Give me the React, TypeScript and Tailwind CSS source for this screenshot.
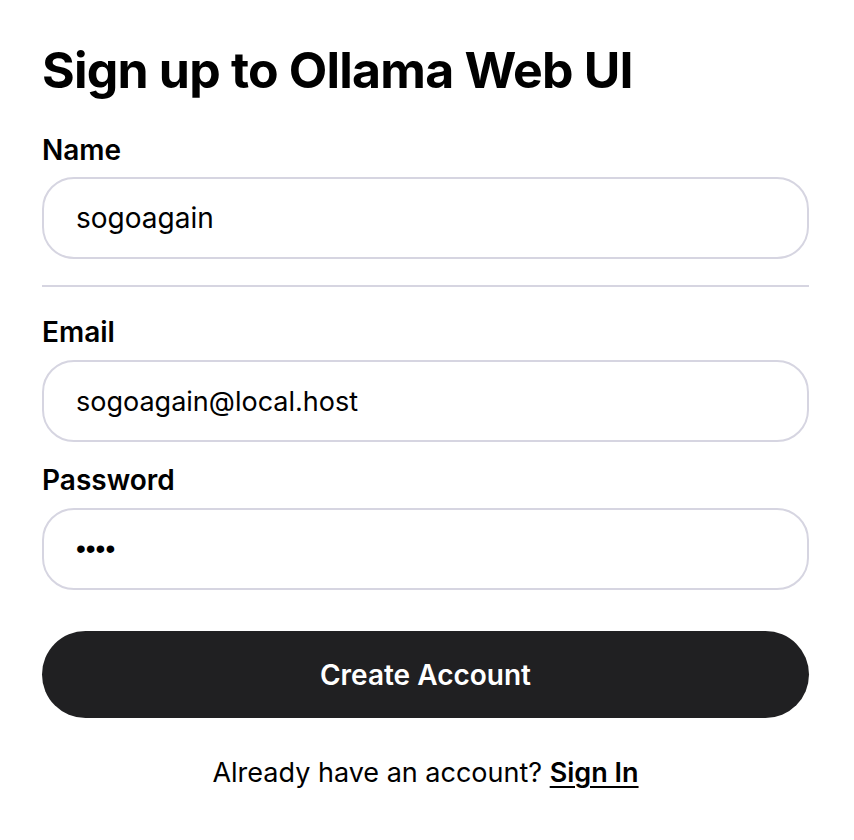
export default function App() {
  return (
    <div
      className="min-h-[840px] bg-white pl-[42px] pr-[45px] pt-[40px] text-black"
      style={{ fontFamily: "Inter, 'Liberation Sans', sans-serif" }}
    >
      <h1 className="text-[50px] font-bold leading-[60px] tracking-[-0.8px]">
        Sign up to Ollama Web UI
      </h1>

      <form className="mt-[34px] flex flex-col" onSubmit={(e) => e.preventDefault()}>
        <label className="text-[28px] font-semibold leading-[32px]">Name</label>
        <input
          className="mt-[11px] h-[82px] w-full rounded-[32px] border-2 border-[#d6d5e1] px-[32px] text-[28px] outline-none"
          defaultValue="sogoagain"
        />

        <hr className="mt-[26px] border-t-2 border-[#d6d5e1]" />

        <label className="mt-[29px] text-[28px] font-semibold leading-[32px]">Email</label>
        <input
          className="mt-[12px] h-[82px] w-full rounded-[32px] border-2 border-[#d6d5e1] px-[32px] text-[27px] outline-none"
          defaultValue="sogoagain@local.host"
        />

        <label className="mt-[22px] text-[28px] font-semibold leading-[32px]">Password</label>
        <input
          type="password"
          className="mt-[12px] h-[82px] w-full rounded-[32px] border-2 border-[#d6d5e1] px-[32px] font-['Liberation_Sans'] text-[28px] outline-none"
          defaultValue="abcd"
        />

        <button
          type="submit"
          className="mt-[41px] h-[87px] w-full rounded-full bg-[#202022] text-[28px] font-semibold text-white"
        >
          Create Account
        </button>

        <p className="mt-[39px] text-center text-[27px] leading-[32px]">
          Already have an account?{" "}
          <span className="font-semibold underline underline-offset-4">Sign In</span>
        </p>
      </form>
    </div>
  );
}
